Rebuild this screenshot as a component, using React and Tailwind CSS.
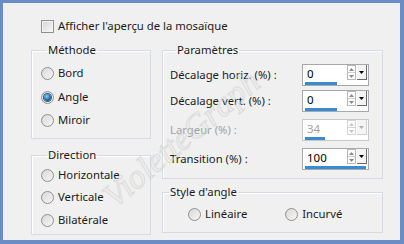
import React from 'react';

const font = { fontFamily: '"Noto Sans", "Open Sans", sans-serif' };

function Radio({ checked }) {
    return (
        <div className="w-[13px] h-[13px] rounded-full border border-[#8f8f8f] bg-[linear-gradient(135deg,#d8d8d8,#f6f6f6)] flex items-center justify-center shrink-0">
            {checked && (
                <div className="w-[7px] h-[7px] rounded-full bg-[radial-gradient(circle_at_40%_35%,#8fd0f8,#1f6ea4_55%,#0b3f63)] ring-1 ring-[#2b5f86]"></div>
            )}
        </div>
    );
}

function Option({ label, checked, className }) {
    return (
        <div className={"flex items-center h-[16px] " + (className || '')}>
            <Radio checked={checked} />
            <span className="ml-[4px] text-[11.3px] text-[#1a1a1a]">{label}</span>
        </div>
    );
}

function SpinField({ value, bar, disabled }) {
    return (
        <div className={"w-[67px] h-[22px] border bg-white flex flex-col " + (disabled ? 'border-[#c8c8c8]' : 'border-[#a6a8ad]')}>
            <div className="flex items-start h-[16px]">
                <span className={"ml-[4px] mt-[1px] text-[11.5px] leading-[15px] flex-1 " + (disabled ? 'text-[#a0a0a0]' : 'text-black')}>{value}</span>
                <div className={"w-[9px] h-[15px] border flex flex-col " + (disabled ? 'border-[#d6d6d6]' : 'border-[#b9b9b9]')}>
                    <div className="flex-1 flex items-center justify-center border-b border-[#d0d0d0]">
                        <svg width="5" height="3" viewBox="0 0 5 3"><path d="M0 3 L2.5 0 L5 3 Z" fill={disabled ? '#c4c4c4' : '#8a8a8a'} /></svg>
                    </div>
                    <div className="flex-1 flex items-center justify-center">
                        <svg width="5" height="3" viewBox="0 0 5 3"><path d="M0 0 L2.5 3 L5 0 Z" fill={disabled ? '#c4c4c4' : '#8a8a8a'} /></svg>
                    </div>
                </div>
                <div className={"ml-[1px] mr-[1px] w-[10px] h-[15px] border-r border-b flex items-center justify-center bg-[#f4f4f4] " + (disabled ? 'border-[#d0d0d0]' : 'border-[#6a6a6a]')}>
                    <svg width="5" height="3" viewBox="0 0 5 3"><path d="M0 0 L2.5 3 L5 0 Z" fill={disabled ? '#b0b0b0' : '#000'} /></svg>
                </div>
            </div>
            <div className="h-[3px] mt-[1px] ml-[2px] bg-[#3b8bd0]" style={{ width: bar }}></div>
        </div>
    );
}

function ParamRow({ label, value, bar, disabled, className }) {
    return (
        <div className={"flex items-center justify-between " + (className || '')}>
            <span className={"text-[11.3px] " + (disabled ? 'text-[#a0a0a0]' : 'text-[#1a1a1a]')}>{label}</span>
            <SpinField value={value} bar={bar} disabled={disabled} />
        </div>
    );
}

function Group({ title, className, children }) {
    return (
        <fieldset className={"border border-[#d5dbe0] shadow-[inset_1px_1px_0_#fff] " + (className || '')}>
            <legend className="ml-[6px] px-[1px] text-[11.3px] leading-[16px] text-[#1a1a1a]">{title}</legend>
            {children}
        </fieldset>
    );
}

export default function App() {
    return (
        <div className="relative w-[404px] h-[244px] overflow-hidden border-[3px] border-b-4 border-r-4 border-[#6b8cc5] bg-[#f0f0f0]" style={font}>
            <div className="pt-[15px] pl-[38px] flex items-center h-[31px]">
                <div className="w-[13px] h-[13px] border border-[#8e8f8f] bg-[linear-gradient(135deg,#d4d4d4,#f8f8f8)] shadow-[inset_0_0_0_1px_#f4f4f4]"></div>
                <span className="ml-[4px] text-[11.3px] text-[#1a1a1a]">Afficher l'aperçu de la mosaïque</span>
            </div>

            <div className="mt-[8px] pl-[28px] flex gap-[11px]">
                <div className="w-[120px] flex flex-col gap-[8px]">
                    <Group title="Méthode" className="h-[97px] pl-[9px]">
                        <Option label="Bord" className="mt-[7px]" />
                        <Option label="Angle" checked className="mt-[8px]" />
                        <Option label="Miroir" className="mt-[7px]" />
                    </Group>
                    <Group title="Direction" className="h-[88px] pl-[9px]">
                        <Option label="Horizontale" className="mt-[4px]" />
                        <Option label="Verticale" className="mt-[6px]" />
                        <Option label="Bilatérale" className="mt-[7px]" />
                    </Group>
                </div>

                <div className="w-[221px] flex flex-col gap-[5px]">
                    <Group title="Paramètres" className="h-[137px] pl-[7px] pr-[13px]">
                        <ParamRow label="Décalage horiz. (%) :" value="0" bar="32px" className="mt-[6px]" />
                        <ParamRow label="Décalage vert. (%) :" value="0" bar="32px" className="mt-[4px]" />
                        <ParamRow label="Largeur (%) :" value="34" bar="20px" disabled className="mt-[7px]" />
                        <ParamRow label="Transition (%) :" value="100" bar="61px" className="mt-[7px]" />
                    </Group>
                    <Group title="Style d'angle" className="h-[49px]">
                        <div className="flex items-center mt-[6px]">
                            <Option label="Linéaire" className="ml-[25px]" />
                            <Option label="Incurvé" className="ml-[38px]" />
                        </div>
                    </Group>
                </div>
            </div>

            <div
                className="pointer-events-none absolute left-[82px] top-[110px] -rotate-[40deg] text-[34px] italic text-transparent [-webkit-text-stroke:1px_#cfcfcf] opacity-60"
                style={{ fontFamily: '"Liberation Serif", serif' }}
            >
                VioletteGraph
            </div>
        </div>
    );
}
